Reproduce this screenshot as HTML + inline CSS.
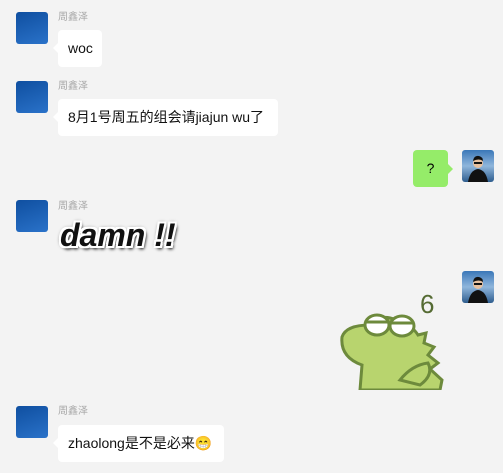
<!DOCTYPE html>
<html><head><meta charset="utf-8"><style>
body{margin:0;width:503px;height:473px;background:#f3f3f3;font-family:"Liberation Sans","Noto Sans CJK SC",sans-serif;position:relative;overflow:hidden}
.av{position:absolute;width:32px;height:32px;border-radius:3px;background:linear-gradient(160deg,#0f4fa0,#2a72c9)}
.nm{position:absolute;left:58px;font-size:10px;color:#a8a8a8;line-height:12px}
.b{position:absolute;left:58px;height:37px;background:#fff;border-radius:4px;font-size:14px;color:#111;line-height:37px;padding:0 10px;box-sizing:border-box}
.b:before{content:"";position:absolute;left:-5px;top:13px;border:5px solid transparent;border-left:0;border-right-color:#fff}
.me{position:absolute;width:32px;height:32px;border-radius:3px;overflow:hidden;background:linear-gradient(#3a77b8,#8fb6dc 50%,#2e5d8e)}
</style></head><body>
<div class="av" style="left:16px;top:12px"></div>
<div class="nm" style="top:12px">周鑫泽</div>
<div class="b" style="top:30px;width:44px">woc</div>

<div class="av" style="left:16px;top:81px"></div>
<div class="nm" style="top:81px">周鑫泽</div>
<div class="b" style="top:99px;width:220px">8月1号周五的组会请jiajun wu了</div>

<div style="position:absolute;left:413px;top:150px;width:35px;height:37px;background:#95ec69;border-radius:4px;text-align:center;line-height:37px;font-size:14px">?</div>
<div style="position:absolute;left:448px;top:164px;border:5px solid transparent;border-right:0;border-left-color:#95ec69"></div>
<div class="me" style="left:462px;top:150px"><svg width="32" height="32"><path d="M6 32 Q8 20 16 19 Q24 20 26 32Z" fill="#111"/><circle cx="16" cy="13" r="5" fill="#e8c1a0"/><path d="M11 11 Q12 5 17 6 Q21 7 21 11 Q17 8 11 11Z" fill="#111"/><rect x="12" y="12" width="8" height="2" fill="#111"/></svg></div>

<div class="av" style="left:16px;top:200px"></div>
<div class="nm" style="top:201px">周鑫泽</div>
<div style="position:absolute;left:60px;top:215px;font-size:32px;font-weight:bold;font-style:italic;color:#111;line-height:40px;letter-spacing:0px;text-shadow:2px 0 #fff,-2px 0 #fff,0 2px #fff,0 -2px #fff,2px 2px #fff,-2px -2px #fff,2px -2px #fff,-2px 2px #fff,0 0 4px #000,2px 3px 3px #000">damn !!</div>

<div class="me" style="left:462px;top:271px"><svg width="32" height="32"><path d="M6 32 Q8 20 16 19 Q24 20 26 32Z" fill="#111"/><circle cx="16" cy="13" r="5" fill="#e8c1a0"/><path d="M11 11 Q12 5 17 6 Q21 7 21 11 Q17 8 11 11Z" fill="#111"/><rect x="12" y="12" width="8" height="2" fill="#111"/></svg></div>

<svg style="position:absolute;left:330px;top:285px" width="120" height="105">
<path d="M30 105 L32 80 Q10 72 12 52 Q16 40 40 40 Q50 28 66 35 Q82 40 88 50 L96 48 L94 58 L104 62 L98 70 L108 78 L100 84 L112 95 L110 105Z" fill="#b8d46e" stroke="#6d8a3c" stroke-width="3"/>
<ellipse cx="47" cy="40" rx="12" ry="10" fill="#fff" stroke="#6d8a3c" stroke-width="3"/>
<ellipse cx="72" cy="41" rx="12" ry="10" fill="#fff" stroke="#6d8a3c" stroke-width="3"/>
<path d="M36 37 H58 M61 38 H83" stroke="#6d8a3c" stroke-width="3"/>
<path d="M70 95 Q82 80 98 78 Q104 90 90 100Z" fill="#b8d46e" stroke="#6d8a3c" stroke-width="3"/>
<text x="90" y="28" font-size="26" fill="#556b33" font-family="Liberation Sans">6</text>
</svg>

<div class="av" style="left:16px;top:406px"></div>
<div class="nm" style="top:406px">周鑫泽</div>
<div class="b" style="top:425px;width:166px">zhaolong是不是必来😁</div>
</body></html>
